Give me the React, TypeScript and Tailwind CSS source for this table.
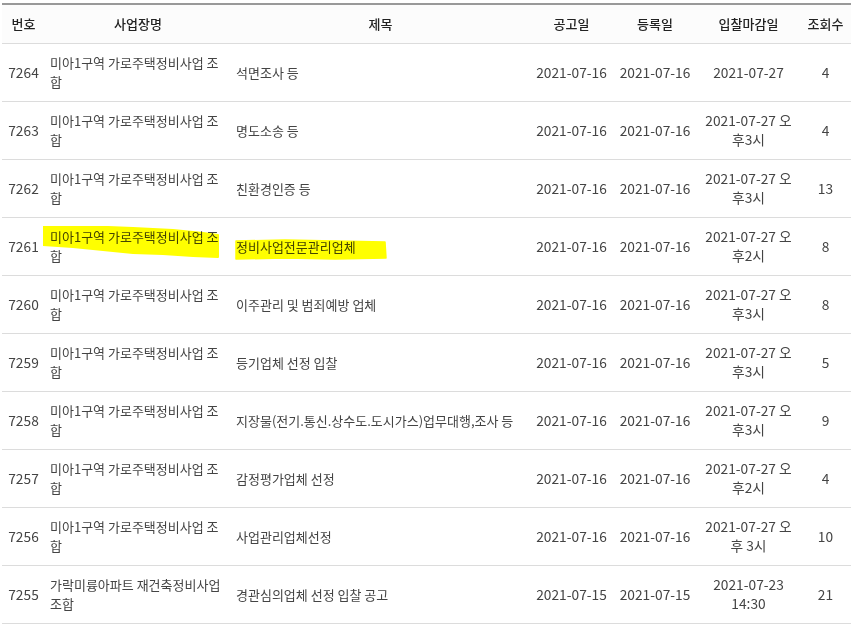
const rows = [
  { no: 7264, site: "미아1구역 가로주택정비사업 조합", title: "석면조사 등", notice: "2021-07-16", reg: "2021-07-16", due: "2021-07-27", views: 4 },
  { no: 7263, site: "미아1구역 가로주택정비사업 조합", title: "명도소송 등", notice: "2021-07-16", reg: "2021-07-16", due: "2021-07-27 오후3시", views: 4 },
  { no: 7262, site: "미아1구역 가로주택정비사업 조합", title: "친환경인증 등", notice: "2021-07-16", reg: "2021-07-16", due: "2021-07-27 오후3시", views: 13 },
  { no: 7261, site: "미아1구역 가로주택정비사업 조합", title: "정비사업전문관리업체", notice: "2021-07-16", reg: "2021-07-16", due: "2021-07-27 오후2시", views: 8, marked: true },
  { no: 7260, site: "미아1구역 가로주택정비사업 조합", title: "이주관리 및 범죄예방 업체", notice: "2021-07-16", reg: "2021-07-16", due: "2021-07-27 오후3시", views: 8 },
  { no: 7259, site: "미아1구역 가로주택정비사업 조합", title: "등기업체 선정 입찰", notice: "2021-07-16", reg: "2021-07-16", due: "2021-07-27 오후3시", views: 5 },
  { no: 7258, site: "미아1구역 가로주택정비사업 조합", title: "지장물(전기.통신.상수도.도시가스)업무대행,조사 등", notice: "2021-07-16", reg: "2021-07-16", due: "2021-07-27 오후3시", views: 9 },
  { no: 7257, site: "미아1구역 가로주택정비사업 조합", title: "감정평가업체 선정", notice: "2021-07-16", reg: "2021-07-16", due: "2021-07-27 오후2시", views: 4 },
  { no: 7256, site: "미아1구역 가로주택정비사업 조합", title: "사업관리업체선정", notice: "2021-07-16", reg: "2021-07-16", due: "2021-07-27 오후 3시", views: 10 },
  { no: 7255, site: "가락미륭아파트 재건축정비사업 조합", title: "경관심의업체 선정 입찰 공고", notice: "2021-07-15", reg: "2021-07-15", due: "2021-07-23 14:30", views: 21 },
];

function SiteMark() {
  return (
    <svg className="absolute left-[-2px] top-[8px] mix-blend-multiply pointer-events-none" width="178" height="34" viewBox="0 0 178 34">
      <path d="M0 1 L40 0 L90 2 L130 4 L160 7 L175 9 L175 31 L150 30 L120 28 L90 27 L60 24 L30 21 L0 19 Z" fill="#ffff00" stroke="#ffff00" strokeWidth="2" strokeLinejoin="round" />
    </svg>
  );
}

function TitleMark() {
  return (
    <svg className="absolute left-[4px] top-[21px] mix-blend-multiply pointer-events-none" width="152" height="21" viewBox="0 0 152 21">
      <path d="M1 2 L50 1 L100 2 L150 3 L151 19 L100 20 L50 19 L1 20 Z" fill="#ffff00" stroke="#ffff00" strokeWidth="1.5" strokeLinejoin="round" />
    </svg>
  );
}

export default function App() {
  const font = { fontFamily: '"Noto Sans CJK KR", "Noto Sans", sans-serif' };
  return (
    <div className="bg-white pl-[2px] pt-[3px]" style={font}>
      <table className="w-[849px] table-fixed border-collapse border-t-[2px] border-t-[#999] text-[13px] text-[#444]">
        <colgroup>
          <col className="w-[43px]" />
          <col className="w-[186px]" />
          <col className="w-[299px]" />
          <col className="w-[83px]" />
          <col className="w-[84px]" />
          <col className="w-[103px]" />
          <col className="w-[51px]" />
        </colgroup>
        <thead>
          <tr className="h-[39px] bg-[#fcfcfc] border-b border-[#dcdcdc] text-[#222]">
            <th className="font-medium">번호</th>
            <th className="font-medium">사업장명</th>
            <th className="font-medium">제목</th>
            <th className="font-medium">공고일</th>
            <th className="font-medium">등록일</th>
            <th className="font-medium">입찰마감일</th>
            <th className="font-medium">조회수</th>
          </tr>
        </thead>
        <tbody>
          {rows.map((r) => (
            <tr key={r.no} className="h-[58px] border-b border-[#dcdcdc] leading-[19px]">
              <td className="text-center text-[13.75px]">{r.no}</td>
              <td className="relative px-[5px]">
                {r.marked && <SiteMark />}
                {r.site}
              </td>
              <td className="relative px-[5px] whitespace-nowrap">
                {r.marked && <TitleMark />}
                {r.title}
              </td>
              <td className="text-center text-[13.75px]">{r.notice}</td>
              <td className="text-center text-[13.75px]">{r.reg}</td>
              <td className="text-center text-[13.75px] px-[5px]">{r.due}</td>
              <td className="text-center text-[13.75px]">{r.views}</td>
            </tr>
          ))}
        </tbody>
      </table>
    </div>
  );
}
